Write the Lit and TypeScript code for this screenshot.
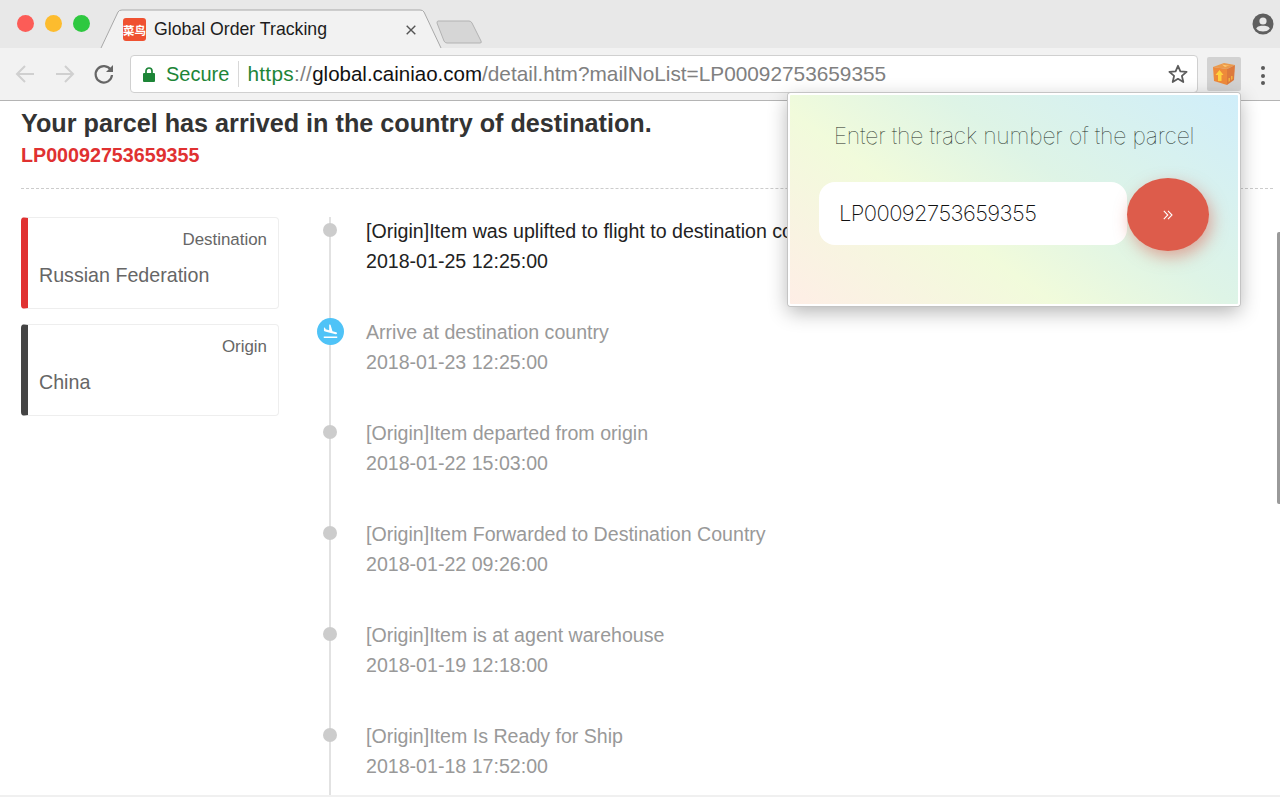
import { LitElement, html, css } from "lit";
import { customElement } from "lit/decorators.js";

const events = [
  { t: "[Origin]Item was uplifted to flight to destination country", d: "2018-01-25 12:25:00", cur: true },
  { t: "Arrive at destination country", d: "2018-01-23 12:25:00", plane: true },
  { t: "[Origin]Item departed from origin", d: "2018-01-22 15:03:00" },
  { t: "[Origin]Item Forwarded to Destination Country", d: "2018-01-22 09:26:00" },
  { t: "[Origin]Item is at agent warehouse", d: "2018-01-19 12:18:00" },
  { t: "[Origin]Item Is Ready for Ship", d: "2018-01-18 17:52:00" },
];

@customElement("app-root")
export class AppRoot extends LitElement {
  static styles = css`
    :host { display: block; width: 1280px; height: 800px; overflow: hidden; position: relative; background: #fff; font-family: "Liberation Sans", Arial, sans-serif; }
    .strip { height: 48px; background: #e8e8e8; display: flex; align-items: flex-start; position: relative; }
    .lights { display: flex; gap: 11px; padding: 15px 0 0 17px; width: 100px; box-sizing: border-box; }
    .light { width: 17px; height: 17px; border-radius: 50%; }
    .tab { position: relative; width: 342px; height: 39px; margin-top: 9px; padding-top: 2px; box-sizing: border-box; flex: none; display: flex; align-items: center; }
    .tab-bg { position: absolute; left: 0; top: 0; }
    .fav { position: relative; margin-left: 23px; width: 23px; height: 23px; border-radius: 3px; background: #ef5131; color: #fff; font: 700 11.5px "Noto Sans CJK SC", sans-serif; display: flex; align-items: center; justify-content: center; white-space: nowrap; }
    .title { position: relative; margin-left: 8px; font-size: 17.7px; color: #1c1c1c; flex: 1; }
    .close { position: relative; margin-right: 26px; display: flex; }
    .newtab { margin-left: -6px; margin-top: 20px; flex: none; display: flex; }
    .avatar { position: absolute; right: 6px; top: 13px; display: flex; }
    .bar { height: 53px; box-sizing: border-box; background: #f2f2f2; border-bottom: 1px solid #b4b4b4; display: flex; align-items: flex-start; position: relative; }
    .nav { display: flex; width: 130px; flex: none; padding: 14px 0 0 14px; box-sizing: border-box; gap: 18px; }
    .nav svg { display: block; }
    .nav .reload { margin-left: -1px; }
    .omni { width: 1068px; height: 38px; margin-top: 7px; flex: none; box-sizing: border-box; background: #fff; border: 1px solid #d0d0d0; border-radius: 4px; display: flex; align-items: center; font-size: 20px; white-space: nowrap; }
    .lock { margin-left: 12px; display: flex; }
    .secure { color: #1d8537; margin-left: 11px; }
    .sep { width: 1px; height: 26px; background: #d8d8d8; margin: 0 8px 0 9px; }
    .https { color: #1d8537; font-size: 20.8px; letter-spacing: 0.3px; }
    .slash { color: #808080; font-size: 20.8px; letter-spacing: 0.3px; }
    .host { color: #111; font-size: 20.5px; }
    .path { color: #808080; flex: 1; font-size: 20.8px; }
    .star { margin-right: 9px; display: flex; }
    .ext { width: 34px; height: 34px; margin: 9px 0 0 9px; background: #d2d2d2; border-radius: 2px; flex: none; display: flex; align-items: center; justify-content: center; }
    .dots { margin: 18px 0 0 20px; display: flex; flex-direction: column; gap: 3.5px; }
    .dots i { width: 4px; height: 4px; border-radius: 50%; background: #5a5a5a; display: block; }

    .page { padding: 8px 7px 0 21px; height: 696px; box-sizing: border-box; border-bottom: 2px solid #f0f0f0; overflow: hidden; }
    h1 { margin: 0; font-size: 25.2px; line-height: 29px; color: #333; font-weight: 700; }
    .no { margin-top: 5px; font-size: 19.7px; line-height: 24px; font-weight: 700; color: #e03131; }
    .rule { border-top: 1px dashed #ccc; margin-top: 21px; }
    .cols { display: flex; margin-top: 28px; }
    .cards { width: 258px; flex: none; display: flex; flex-direction: column; gap: 15px; }
    .card { height: 92px; box-sizing: border-box; border: 1px solid #eee; border-left: 7px solid #e03131; border-radius: 4px; padding: 11px 11px 0 11px; color: #666; }
    .card.o { border-left-color: #444; }
    .card .k { text-align: right; font-size: 16.9px; line-height: 22px; }
    .card .v { font-size: 19.65px; line-height: 24px; margin-top: 12px; }
    .tl { margin-left: 38px; flex: 1; position: relative; }
    .line { position: absolute; left: 12px; top: 0; height: 640px; width: 2px; background: #e2e2e2; }
    .ev { height: 101px; display: flex; position: relative; }
    .mark { width: 27px; height: 27px; display: flex; align-items: center; justify-content: center; flex: none; position: relative; top: -1px; }
    .mark svg { margin-top: 2px; flex: none; }
    .dot { width: 14px; height: 14px; border-radius: 50%; background: #ccc; margin-right: 2px; }
    .txt { margin-left: 22px; margin-top: -1px; font-size: 19.6px; line-height: 30px; color: #999; white-space: nowrap; }
    .ev.cur .txt { color: #222; }

    .popup { position: absolute; left: 788px; top: 93px; width: 452px; height: 213px; box-sizing: border-box; border: 2px solid #fff; border-radius: 3px; box-shadow: 0 0 0 1px #c4c4c4, 0 6px 20px rgba(0,0,0,.3); background: linear-gradient(36deg, #feeee6 0%, #f1fbdb 36%, #def4e6 60%, #d0eefa 100%); padding-top: 26px; }
    .popup .h { text-align: center; font: 100 23px/30px Inter, sans-serif; color: #1a2a1b; letter-spacing: -0.22px; }
    .form { display: flex; align-items: center; margin: 27px 0 0 29px; }
    .input { width: 308px; height: 63px; margin-bottom: 2px; padding-bottom: 2px; box-sizing: border-box; background: #fff; border-radius: 16px; padding-left: 20px; display: flex; align-items: center; font: 170 22px Inter, sans-serif; color: #111; letter-spacing: -0.6px; }
    .go { width: 82px; height: 73px; border-radius: 50%; background: #dd5c4b; box-shadow: 3px 6px 16px rgba(221,92,75,.5); display: flex; align-items: center; justify-content: center; }
    .thumb { position: absolute; right: 0; top: 232px; width: 3px; height: 272px; background: #9a9a9a; border-radius: 2px 0 0 2px; }
  `;

  render() {
    return html`
      <div class="strip">
        <div class="lights">
          <span class="light" style="background:#fc5c57"></span>
          <span class="light" style="background:#fdbc2e"></span>
          <span class="light" style="background:#2ec840"></span>
        </div>
        <div class="tab">
          <svg class="tab-bg" width="342" height="39" viewBox="0 0 342 39">
            <path d="M1 39 L18 3 Q19 1 22 1 L320 1 Q323 1 324 3 L341 39 Z" fill="#f2f2f2" />
            <path d="M1 39 L18 3 Q19 1 22 1 L320 1 Q323 1 324 3 L341 39" fill="none" stroke="#a8a8a8" />
          </svg>
          <span class="fav">菜鸟</span>
          <span class="title">Global Order Tracking</span>
          <span class="close"><svg width="10" height="10" viewBox="0 0 10 10"><path d="M.7 .7 L9.3 9.3 M9.3 .7 L.7 9.3" stroke="#555" stroke-width="1.4"/></svg></span>
        </div>
        <span class="newtab"><svg width="48" height="24" viewBox="0 0 48 24"><path d="M2 1 L33 1 Q35 1 36 3 L45 21 Q46 23 44 23 L11 23 Q9 23 8 21 L1 3 Q1 1 2 1 Z" fill="#d6d6d6" stroke="#b2b2b2"/></svg></span>
        <span class="avatar"><svg width="22" height="22" viewBox="0 0 22 22"><circle cx="11" cy="11" r="10.5" fill="#5f5f5f"/><circle cx="11" cy="8" r="3.6" fill="#e8e8e8"/><path d="M4.2 15.6 C5.5 13 8.5 12.8 11 12.8 C13.5 12.8 16.5 13 17.8 15.6 C16 18 13.5 18.6 11 18.6 C8.5 18.6 6 18 4.2 15.6 Z" fill="#e8e8e8"/></svg></span>
      </div>
      <div class="bar">
        <div class="nav">
          <svg width="22" height="24" viewBox="0 0 22 24"><path d="M20 12 H3 M11 4 L3 12 L11 20" fill="none" stroke="#d0d0d0" stroke-width="2"/></svg>
          <svg width="22" height="24" viewBox="0 0 22 24"><path d="M2 12 H19 M11 4 L19 12 L11 20" fill="none" stroke="#d0d0d0" stroke-width="2"/></svg>
          <svg class="reload" width="22" height="24" viewBox="0 0 22 24"><path d="M17.8 8 A8.2 8.2 0 1 0 19 13" fill="none" stroke="#666" stroke-width="2.2"/><path d="M20 3 V10 H13 Z" fill="#666"/></svg>
        </div>
        <div class="omni">
          <span class="lock"><svg width="12" height="15" viewBox="0 0 12 15"><path d="M3 6 V4 A3 3 0 0 1 9 4 V6" fill="none" stroke="#1d8537" stroke-width="1.7"/><rect y="6" width="12" height="9" rx="1" fill="#1d8537"/></svg></span>
          <span class="secure">Secure</span><span class="sep"></span>
          <span class="https">https</span><span class="slash">://</span><span class="host">global.cainiao.com</span><span class="path">/detail.htm?mailNoList=LP00092753659355</span>
          <span class="star"><svg width="20" height="20" viewBox="0 0 20 20"><path d="M10 1.8 L12.4 7.4 L18.6 7.9 L13.9 11.9 L15.3 18 L10 14.8 L4.7 18 L6.1 11.9 L1.4 7.9 L7.6 7.4 Z" fill="none" stroke="#5c5c5c" stroke-width="1.8" stroke-linejoin="round"/></svg></span>
        </div>
        <div class="ext"><svg width="24" height="24" viewBox="0 0 24 24">
          <path d="M1 5 L12 1 L23 3 L15 7 Z" fill="#eb9a4c"/>
          <path d="M1 5 L15 7 L15 23 L2 19 Z" fill="#ee8a3a"/>
          <path d="M15 7 L23 3 L22 18 L15 23 Z" fill="#dd7a3c"/>
          <path d="M7.5 8 L11.5 13 H9.5 V19 H6 V13 H3.5 Z" fill="#ffd23f"/>
          <path d="M16.5 20 V16 H18 V19 Z M19 18 V14 H20.5 V17 Z" fill="#f3b23e"/>
          <path d="M10 2.5 L15 3.5 L18 3 L13 5 Z" fill="#ffc970"/>
        </svg></div>
        <div class="dots"><i></i><i></i><i></i></div>
      </div>
      <div class="page">
        <h1>Your parcel has arrived in the country of destination.</h1>
        <div class="no">LP00092753659355</div>
        <div class="rule"></div>
        <div class="cols">
          <div class="cards">
            <div class="card"><div class="k">Destination</div><div class="v">Russian Federation</div></div>
            <div class="card o"><div class="k">Origin</div><div class="v">China</div></div>
          </div>
          <div class="tl">
            <div class="line"></div>
            ${events.map(e => html`
              <div class="ev ${e.cur ? "cur" : ""}">
                <div class="mark">${e.plane
                  ? html`<svg width="27" height="27" viewBox="0 0 27 27"><circle cx="13.5" cy="13.5" r="13.5" fill="#4fc3f7"/><svg x="5" y="5" width="17" height="17" viewBox="0 0 24 24"><path fill="#fff" d="M2.5 19h19v2h-19zm7.18-5.73l4.35 1.16 5.31 1.42c.8.21 1.62-.26 1.84-1.06.21-.8-.26-1.62-1.06-1.84l-5.31-1.42-2.76-9.02L10.12 2v8.28L5.15 8.95l-.93-2.32-1.45-.39v5.17l1.6.43 5.31 1.43z"/></svg></svg>`
                  : html`<div class="dot"></div>`}</div>
                <div class="txt">${e.t}<br>${e.d}</div>
              </div>`)}
          </div>
        </div>
      </div>
      <div class="popup">
        <div class="h">Enter the track number of the parcel</div>
        <div class="form">
          <div class="input">LP00092753659355</div>
          <div class="go"><svg width="10" height="10" viewBox="0 0 10 10"><path d="M.8 .8 L4.8 5 L.8 9.2 M5 .8 L9 5 L5 9.2" fill="none" stroke="#fff" stroke-width="1.1"/></svg></div>
        </div>
      </div>
      <div class="thumb"></div>
    `;
  }
}
